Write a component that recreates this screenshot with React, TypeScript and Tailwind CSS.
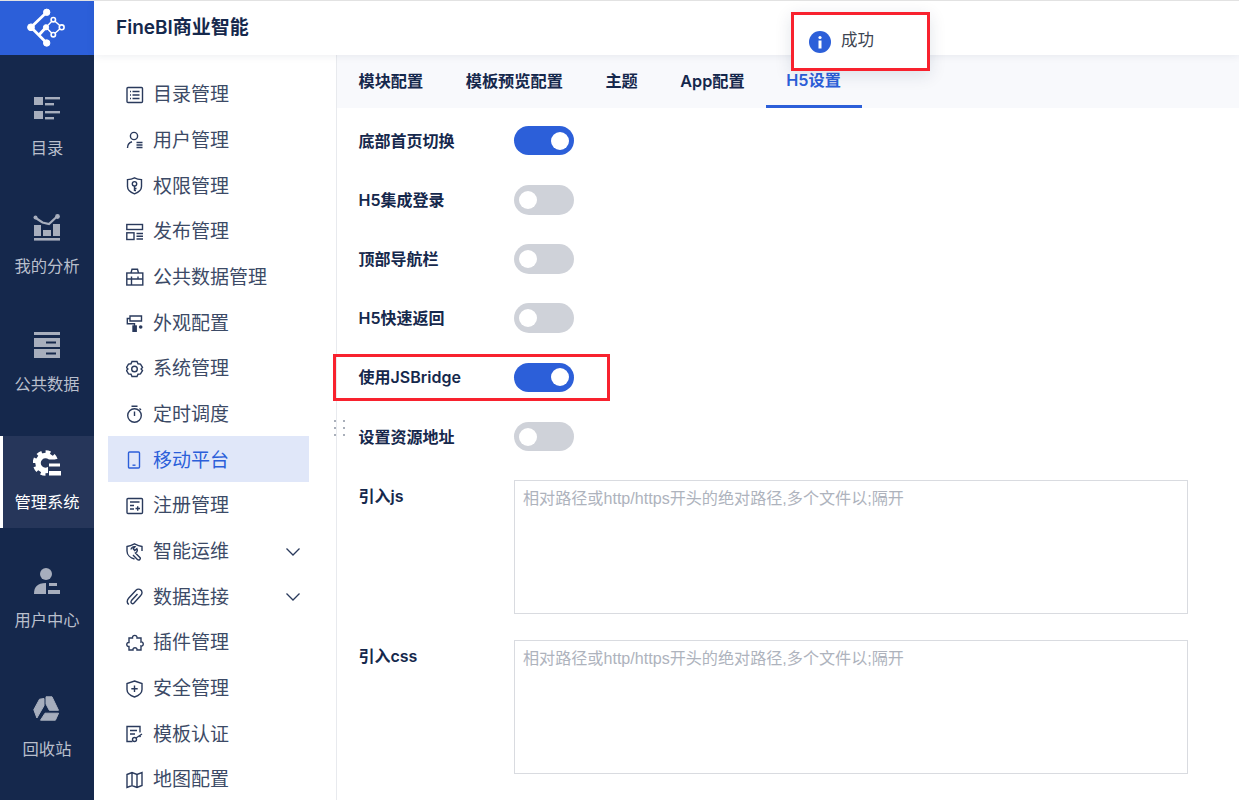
import { ReactNode } from "react";

const railFill = "#a7aebd";

const RailSvg = ({ children }: { children: ReactNode }) => (
  <svg width="28" height="28" viewBox="0 0 28 28" fill={railFill}>
    {children}
  </svg>
);

const railItems: { label: string; icon: ReactNode; active?: boolean }[] = [
  {
    label: "目录",
    icon: (
      <RailSvg>
        <rect x="1" y="2" width="9" height="8" />
        <rect x="1" y="16" width="9" height="8" />
        <rect x="12" y="2" width="15" height="2.4" />
        <rect x="12" y="8" width="9" height="2.4" />
        <rect x="12" y="16" width="15" height="2.4" />
        <rect x="12" y="22" width="9" height="2.4" />
      </RailSvg>
    ),
  },
  {
    label: "我的分析",
    icon: (
      <RailSvg>
        <path d="M2 4.500l7.500 5 6.500 1.500 8-7.500" fill="none" stroke={railFill} strokeWidth="2.200" />
        <circle cx="2.500" cy="4.500" r="2" />
        <circle cx="24.500" cy="3.500" r="2.400" />
        <rect x="1" y="25" width="26" height="2.600" />
        <rect x="1" y="12" width="7" height="11" />
        <rect x="10" y="17" width="8" height="6" />
        <rect x="20" y="11" width="7" height="12" />
      </RailSvg>
    ),
  },
  {
    label: "公共数据",
    icon: (
      <RailSvg>
        <rect x="1" y="1" width="26" height="3" />
        <path fillRule="evenodd" d="M1 7h26v9H1zM13 10.500v2h10v-2z" />
        <path fillRule="evenodd" d="M1 18h26v9H1zM13 21.500v2h10v-2z" />
      </RailSvg>
    ),
  },
  {
    label: "管理系统",
    active: true,
    icon: (
      <svg width="28" height="28" viewBox="0 0 28 28">
        <circle cx="12.500" cy="14" r="11" fill="none" stroke="#fff" strokeWidth="3.500" strokeDasharray="4.800 3.800" />
        <circle cx="12.500" cy="14" r="7.500" fill="none" stroke="#fff" strokeWidth="5.500" />
        <rect x="15" y="10.500" width="13" height="16" fill="#26365a" />
        <rect x="16" y="14.500" width="11" height="3" fill="#fff" />
        <rect x="16" y="22" width="12" height="4.500" fill="#fff" />
      </svg>
    ),
  },
  {
    label: "用户中心",
    icon: (
      <RailSvg>
        <circle cx="13" cy="7" r="6" />
        <path d="M1 27c0-7 3-11 12-11v11z" />
        <rect x="16" y="16" width="8" height="3" />
        <rect x="15" y="23" width="12" height="4" />
      </RailSvg>
    ),
  },
  {
    label: "回收站",
    icon: (
      <svg width="28" height="28" viewBox="0 0 28 28" fill={railFill} stroke={railFill} strokeWidth="1" strokeLinejoin="round">
        <path d="M11 2.500L6.500 3.200 0.800 13.700 3.900 22 11 9.700z" />
        <path d="M13 .8h6l6.500 13.500H16.300L13 8z" />
        <path d="M12 17.200h13.600l-3.200 7H7.500z" />
      </svg>
    ),
  },
];

const NavSvg = ({ children }: { children: ReactNode }) => (
  <svg width="18" height="18" viewBox="0 0 18 18" fill="none" stroke="currentColor" strokeWidth="1.400">
    {children}
  </svg>
);

const menu: { label: string; icon: ReactNode; active?: boolean; arrow?: boolean }[] = [
  {
    label: "目录管理",
    icon: (
      <NavSvg>
        <rect x="1" y="1.500" width="15.500" height="15" rx="1" />
        <path d="M4 5.500h1M6.500 5.500h7M4 9h1M6.500 9h7M4 12.500h1M6.500 12.500h7" />
      </NavSvg>
    ),
  },
  {
    label: "用户管理",
    icon: (
      <NavSvg>
        <circle cx="8" cy="5" r="3.600" />
        <path d="M1.500 17c0-3.500 1.500-5.500 4.500-6.300M10.500 11.500h6M10.500 14h6M10.500 16.500h6" />
      </NavSvg>
    ),
  },
  {
    label: "权限管理",
    icon: (
      <NavSvg>
        <path d="M8.500 .8c2.500 1.200 4.500 1.600 7 1.800v7c0 3.500-3 5.800-7 7.200-4-1.400-7-3.700-7-7.200v-7C4 2.400 6 2 8.500 .8z" />
        <circle cx="8.500" cy="6.800" r="2.200" />
        <path d="M8.500 9v5M8.500 11.500h2M8.500 13.500h1.500" />
      </NavSvg>
    ),
  },
  {
    label: "发布管理",
    icon: (
      <NavSvg>
        <rect x=".8" y="1.500" width="15.700" height="5" />
        <rect x=".8" y="9.800" width="7.200" height="6.700" />
        <path d="M10.500 10.500H17M10.500 13.200H17M10.500 16H17" />
      </NavSvg>
    ),
  },
  {
    label: "公共数据管理",
    icon: (
      <NavSvg>
        <rect x=".8" y="5" width="16" height="12" />
        <path d="M5 5l1-3.800h5.500L12.500 5M.8 11h16M5.500 8.500V17M12 8.500V11" />
      </NavSvg>
    ),
  },
  {
    label: "外观配置",
    icon: (
      <NavSvg>
        <path d="M4 2h11.500v5H4zM4 4.500H1.300v5.300h7.200v2.500" />
        <rect x="7" y="12" width="3.200" height="5.500" fill="currentColor" />
        <circle cx="14.700" cy="13" r="1.800" fill="currentColor" stroke="none" />
      </NavSvg>
    ),
  },
  {
    label: "系统管理",
    icon: (
      <NavSvg>
        <path d="M6 1.500h5l1 2.300 2.500.3 2 3.400-1.400 1.500 1.400 1.500-2 3.400-2.500.3-1 2.300H6l-1-2.300-2.500-.3-2-3.400L1.900 9 .5 7.500l2-3.400L5 3.800z" />
        <circle cx="8.500" cy="9" r="2.800" />
      </NavSvg>
    ),
  },
  {
    label: "定时调度",
    icon: (
      <NavSvg>
        <circle cx="8.500" cy="10.500" r="6.800" />
        <path d="M5.500 1.200h6M8.500 6.500v4.500M13.500 3.500L15 5" />
      </NavSvg>
    ),
  },
  {
    label: "移动平台",
    active: true,
    icon: (
      <NavSvg>
        <rect x="2.500" y="1" width="11" height="16" rx="1" />
        <path d="M6.500 14.200h3" />
      </NavSvg>
    ),
  },
  {
    label: "注册管理",
    icon: (
      <NavSvg>
        <rect x="1" y="1.500" width="15.500" height="15" rx="1" />
        <path d="M4 5h9.500M4 8.500h4M4 12h4M9.500 11.500H14M11.700 9.200v4.600" />
      </NavSvg>
    ),
  },
  {
    label: "智能运维",
    arrow: true,
    icon: (
      <NavSvg>
        <path d="M8.500 16C4.500 15 1 12 1 8V3.500C3.500 3 6 2 8.500 .8 11 2 13.500 3 16 3.500V8" />
        <path d="M5 6.500A3.300 3.300 0 0 1 9 3.700L7.200 5.800l1.500 1.700 2.200-1.800a3.300 3.300 0 0 1-1.500 4.300l4.700 4.700c.8 1.500-1 3-2.500 2L7 12" />
      </NavSvg>
    ),
  },
  {
    label: "数据连接",
    arrow: true,
    icon: (
      <NavSvg>
        <path d="M2.800 16.500c-2-1.500-2.200-4 0-6.500L10 2.200c2-2 6.200-1 6 2.500 0 1-.5 2-1.500 3L8 15c-1.500 1.500-4 0-2.500-2.500L11.500 6" />
      </NavSvg>
    ),
  },
  {
    label: "插件管理",
    icon: (
      <NavSvg>
        <path d="M6.500 4c-.5-3.500 5-3.500 4.500 0h4v4c3-.8 3 4.800 0 4v4h-4c.5-3-4.500-3-4 0H3v-3.500c-3 .5-3-4.500 0-4V4z" />
      </NavSvg>
    ),
  },
  {
    label: "安全管理",
    icon: (
      <NavSvg>
        <path d="M8.500 1L16 3.500v6c0 3.500-3 6-7.500 7.500C4 15.500 1 13 1 9.500v-6z" />
        <path d="M8.500 5.500V12M5.300 8.800h6.400" />
      </NavSvg>
    ),
  },
  {
    label: "模板认证",
    icon: (
      <NavSvg>
        <path d="M6.500 16.500H1v-15h13v6M4 5.500h7M4 9h5" />
        <circle cx="8.500" cy="14.500" r="2" />
        <path d="M10 13l6-4M13.500 10.500l1 1.500" />
      </NavSvg>
    ),
  },
  {
    label: "地图配置",
    icon: (
      <NavSvg>
        <path d="M1 3.500l5-2 5 2 5-2v13l-5 2-5-2-5 2zM6 1.500v13M11 3.500v13" />
      </NavSvg>
    ),
  },
];

const tabs = ["模块配置", "模板预览配置", "主题", "App配置", "H5设置"];

const toggles = [
  { label: "底部首页切换", on: true },
  { label: "H5集成登录", on: false },
  { label: "顶部导航栏", on: false },
  { label: "H5快速返回", on: false },
  { label: "使用JSBridge", on: true },
  { label: "设置资源地址", on: false },
];

const Toggle = ({ on }: { on: boolean }) => (
  <div
    className={
      on
        ? "flex h-[29.500px] w-[59.500px] items-center justify-end rounded-full bg-[#2c5fd9] px-[5px]"
        : "flex h-[29.500px] w-[59.500px] items-center justify-start rounded-full bg-[#cfd2d9] px-[5px]"
    }
  >
    <div className="h-[18px] w-[18px] rounded-full bg-white" />
  </div>
);

const placeholder = "相对路径或http/https开头的绝对路径,多个文件以;隔开";

export default function App() {
  return (
    <div className="relative flex h-[800px] w-[1239px] overflow-hidden border-t border-[#e2e2e2] bg-white font-['Inter','Noto_Sans_CJK_SC',sans-serif] text-[#15284c]">
      <aside className="flex w-[94px] shrink-0 flex-col bg-[#15284c]">
        <div className="flex h-[54px] items-center justify-center bg-[#2c5fd9]">
          <svg width="40" height="40" viewBox="0 0 40 40" fill="none" stroke="#fff">
            <path d="M19.700 4.300L4 19.300 19.700 35M12 27l7-7.700" strokeWidth="2.800" />
            <path d="M19 19.300l7.300-7.600 8.400 7.600-8.400 7.400z" strokeWidth="1.400" />
            <circle cx="19.700" cy="4.300" r="3.200" fill="#fff" />
            <circle cx="4" cy="19.300" r="3.400" fill="#fff" />
            <circle cx="19" cy="19.300" r="2.600" fill="#fff" />
            <circle cx="19.700" cy="35" r="3.200" fill="#fff" />
            <circle cx="26.300" cy="11.700" r="2.200" fill="#2c5fd9" strokeWidth="1.600" />
            <circle cx="34.700" cy="19.300" r="2.400" fill="#2c5fd9" strokeWidth="1.600" />
            <circle cx="26.300" cy="26.700" r="2.200" fill="#2c5fd9" strokeWidth="1.600" />
          </svg>
        </div>
        <nav className="flex flex-col gap-[26px] pt-[27px]">
          {railItems.map((item) => (
            <div
              key={item.label}
              className={
                item.active
                  ? "flex h-[92px] flex-col items-center border-l-[3px] border-white bg-[#26365a] pt-[13px] pr-[3px] text-white"
                  : item.label === "回收站"
                    ? "mt-[11px] flex h-[92px] flex-col items-center pt-[13px] text-[#b9bfcc]"
                    : "flex h-[92px] flex-col items-center pt-[13px] text-[#b9bfcc]"
              }
            >
              {item.icon}
              <span className="mt-[13px] text-[16.300px] leading-[24px] whitespace-nowrap">{item.label}</span>
            </div>
          ))}
        </nav>
      </aside>

      <div className="flex min-w-0 flex-1 flex-col">
        <header className="z-10 flex h-[54px] shrink-0 items-center bg-white pl-[22px] text-[19px] font-semibold shadow-[0_1px_8px_rgba(20,40,80,0.08)]">
          FineBI商业智能
        </header>
        <div className="flex min-h-0 flex-1">
          <div className="w-[243px] shrink-0 border-r border-[#e8eaee] pt-[15.500px] pl-[14px]">
            {menu.map((item) => (
              <div
                key={item.label}
                className={
                  item.active
                    ? "flex h-[45.700px] w-[201px] items-center bg-[#e0e7f9] pt-[2.600px] pl-[18px] text-[#2c5fd9]"
                    : "flex h-[45.700px] w-[201px] items-center pt-[2.600px] pl-[18px] text-[#3c4a66]"
                }
              >
                <span className={item.active ? "flex w-[27px] shrink-0 text-[#2c5fd9]" : "flex w-[27px] shrink-0 text-[#2a3a5c]"}>
                  {item.icon}
                </span>
                <span className="text-[19px] leading-none whitespace-nowrap">{item.label}</span>
                {item.arrow && (
                  <svg className="mr-[8px] ml-auto" width="16" height="10" viewBox="0 0 16 10" fill="none" stroke="#2a3a5c" strokeWidth="1.300">
                    <path d="M1.500 1.500L8 8l6.500-6.500" />
                  </svg>
                )}
              </div>
            ))}
          </div>

          <main className="min-w-0 flex-1">
            <div className="flex h-[53px] items-center bg-[#f8f9fc] pl-[21.500px] text-[16.200px] font-semibold">
              {tabs.map((tab, i) =>
                i === tabs.length - 1 ? (
                  <div key={tab} className="relative -ml-[21.500px] flex h-full w-[96px] items-center justify-center border-b-[3px] border-[#2c5fd9] text-[#2c5fd9]">
                    {tab}
                  </div>
                ) : (
                  <div key={tab} className="mr-[42.500px] whitespace-nowrap">
                    {tab}
                  </div>
                ),
              )}
            </div>
            <div className="pt-[3px] pl-[21.500px]">
              {toggles.map((row) => (
                <div key={row.label} className="flex h-[59.200px] items-center">
                  <span className="w-[155.500px] text-[16px] font-semibold">{row.label}</span>
                  <Toggle on={row.on} />
                </div>
              ))}
              <div className="mt-[14px] flex">
                <span className="w-[155.500px] pt-[4px] text-[16px] font-semibold">引入js</span>
                <textarea
                  readOnly
                  placeholder={placeholder}
                  className="h-[134px] w-[674px] resize-none border border-[#d9dbe0] px-[8px] py-[5px] font-['Liberation_Sans','Noto_Sans_CJK_SC',sans-serif] text-[16.100px] leading-[24px] outline-none placeholder:text-[#aeb3bd]"
                />
              </div>
              <div className="mt-[26px] flex">
                <span className="w-[155.500px] pt-[4px] text-[16px] font-semibold">引入css</span>
                <textarea
                  readOnly
                  placeholder={placeholder}
                  className="h-[134px] w-[674px] resize-none border border-[#d9dbe0] px-[8px] py-[5px] font-['Liberation_Sans','Noto_Sans_CJK_SC',sans-serif] text-[16.100px] leading-[24px] outline-none placeholder:text-[#aeb3bd]"
                />
              </div>
            </div>
          </main>
        </div>
      </div>

      {/* drag handle on the divider */}
      <div className="absolute top-[419px] left-[334px] grid grid-cols-2 gap-x-[7px] gap-y-[5px]">
        {[0, 1, 2, 3, 4, 5].map((n) => (
          <span key={n} className="h-[2px] w-[2px] bg-[#a9afba]" />
        ))}
      </div>

      {/* toast */}
      <div className="absolute top-[11px] left-[791px] z-20 flex h-[59px] w-[139px] items-center border-[3px] border-[#f8222e] bg-white pl-[15px] text-[#3d4552] shadow-[0_4px_16px_rgba(20,40,80,0.12)]">
        <svg width="22" height="22" viewBox="0 0 22 22">
          <circle cx="11" cy="11" r="11" fill="#2c5fd9" />
          <circle cx="11" cy="6.500" r="1.600" fill="#fff" />
          <rect x="9.500" y="9.500" width="3" height="8" fill="#fff" />
        </svg>
        <span className="ml-[10px] -translate-y-[1px] text-[16.500px]">成功</span>
      </div>

      {/* highlight around the JSBridge row */}
      <div className="absolute top-[353px] left-[333px] z-20 h-[47px] w-[277px] border-[3px] border-[#f8222e]" />
    </div>
  );
}
